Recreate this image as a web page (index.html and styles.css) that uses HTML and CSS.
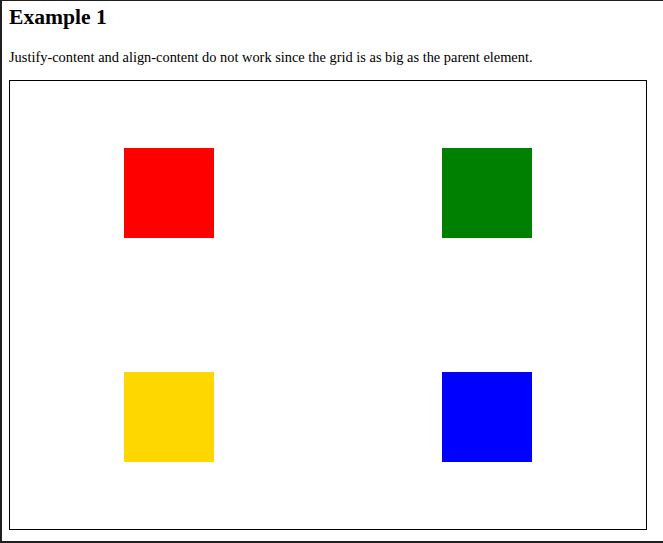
FILE: index.html
```html
<!DOCTYPE html>
<html lang="en">
<head>
<meta charset="utf-8">
<title>Example 1</title>
<link rel="stylesheet" href="styles.css">
</head>
<body>
<div class="frame">
  <h2 class="title">Example 1</h2>
  <p class="desc">Justify-content and align-content do not work since the grid is as big as the parent element.</p>
  <div class="grid">
    <div class="cell red"></div>
    <div class="cell green"></div>
    <div class="cell gold"></div>
    <div class="cell blue"></div>
  </div>
</div>
</body>
</html>
```
FILE: styles.css
```css
html, body {
  margin: 0;
  padding: 0;
  background: #ffffff;
}

body {
  font-family: "Liberation Serif", "Times New Roman", serif;
  color: #000000;
}

.frame {
  box-sizing: border-box;
  height: 543px;
  border-top: 1px solid #1f1f1f;
  border-left: 2px solid #1f1f1f;
  border-bottom: 2px solid #1f1f1f;
  padding: 0 7px;
  overflow: hidden;
}

.title {
  font-size: 21.6px;
  font-weight: bold;
  margin: 4px 0 0;
}

.desc {
  font-size: 14.4px;
  margin: 19px 0 14.4px;
}

.grid {
  width: 636px;
  height: 448px;
  border: 1px solid #000000;
  display: grid;
  grid-template-columns: 1fr 1fr;
  grid-template-rows: 1fr 1fr;
  place-items: center;
}

.cell {
  width: 90px;
  height: 90px;
}

.red { background: #ff0000; }
.green { background: #008000; }
.gold { background: #ffd700; }
.blue { background: #0000ff; }
```
